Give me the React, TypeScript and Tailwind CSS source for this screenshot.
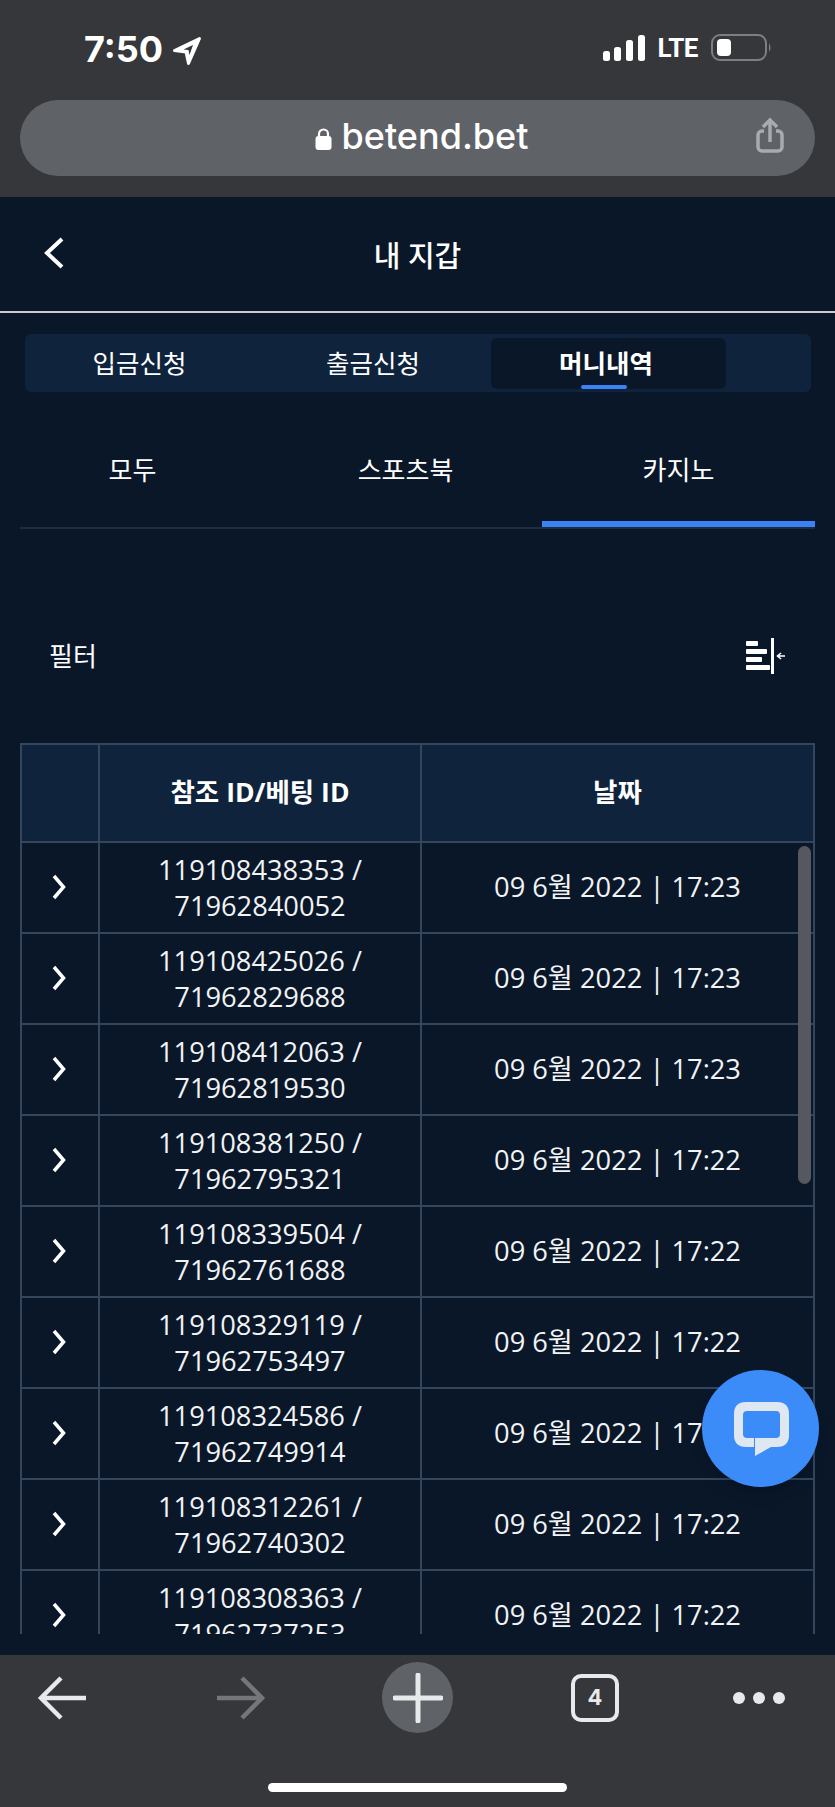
const SANS = "font-['Open_Sans','Noto_Sans_CJK_KR',sans-serif]"

const ROWS = [
  ["119108438353", "71962840052", "17:23"],
  ["119108425026", "71962829688", "17:23"],
  ["119108412063", "71962819530", "17:23"],
  ["119108381250", "71962795321", "17:22"],
  ["119108339504", "71962761688", "17:22"],
  ["119108329119", "71962753497", "17:22"],
  ["119108324586", "71962749914", "17:22"],
  ["119108312261", "71962740302", "17:22"],
  ["119108308363", "71962737253", "17:22"],
]

function StatusBar() {
  return (
    <div className="h-[100px] flex items-start justify-between pt-[30px] pl-[84px] pr-[63px]">
      <div className="flex items-center gap-[9px]">
        <span className="font-['Inter',sans-serif] font-bold text-[36px] leading-[38px] text-white">7:50</span>
        <svg width="30" height="30" viewBox="0 0 30 30" className="mt-[4px]">
          <path d="M27.500 2.500 L2.500 14.500 L14 16 L16.500 27.500 Z" fill="#fff" stroke="#fff" strokeWidth="3" strokeLinejoin="round" />
          <path d="M21 9 L11.500 13.500 L16.500 14 L17.500 19 Z" fill="#36373b" />
        </svg>
      </div>
      <div className="flex items-center pt-[4px]">
        <svg width="44" height="28" viewBox="0 0 44 28">
          <rect x="1" y="17" width="7" height="10" rx="2.500" fill="#fff" />
          <rect x="12" y="13" width="7" height="14" rx="2.500" fill="#fff" />
          <rect x="24" y="6" width="7" height="21" rx="2.500" fill="#fff" />
          <rect x="36" y="1" width="7" height="26" rx="2.500" fill="#fff" />
        </svg>
        <span className="ml-[12px] font-['Roboto',sans-serif] font-bold text-[26px] leading-[28px] text-white tracking-[-0.5px]">LTE</span>
        <svg width="62" height="28" viewBox="0 0 62 28" className="ml-[12px]">
          <rect x="2" y="1" width="54" height="25" rx="8" fill="none" stroke="#7d7e81" strokeWidth="2" />
          <rect x="7" y="5" width="14" height="17" rx="4" fill="#fff" />
          <path d="M59 9 Q62 13.500 59 18 Z" fill="#7d7e81" />
        </svg>
      </div>
    </div>
  )
}

function UrlBar() {
  return (
    <div className="relative mx-[20px] h-[76px] rounded-[38px] bg-[#5f6266] flex items-center justify-center pl-[8px]">
      <div className="flex items-center gap-[10px] -mt-[4px]">
        <svg width="17" height="24" viewBox="0 0 17 24" className="mt-[5px]">
          <path d="M4 10 V7 a4.500 4.500 0 0 1 9 0 V10" fill="none" stroke="#fff" strokeWidth="2.200" />
          <rect x="0.500" y="9" width="16" height="14" rx="3" fill="#fff" />
        </svg>
        <span className="font-['Inter',sans-serif] font-medium text-[36px] leading-[44px] text-white">betend.bet</span>
      </div>
      <svg width="30" height="36" viewBox="0 0 30 36" className="absolute right-[30px] top-[17px]">
        <path d="M9 14 H7 a4 4 0 0 0 -4 4 V30 a4 4 0 0 0 4 4 H23 a4 4 0 0 0 4 -4 V18 a4 4 0 0 0 -4 -4 H21" fill="none" stroke="#a9abae" strokeWidth="3.500" />
        <path d="M15 25 V3 M8 10 L15 3 L22 10" fill="none" stroke="#a9abae" strokeWidth="3.500" />
      </svg>
    </div>
  )
}

function MainTabs() {
  return (
    <div className="mt-[21px] ml-[25px] mr-[24px] h-[58px] rounded-[6px] bg-[#10233d] flex items-center text-[25.500px] text-white">
      <div className="w-[233px] pr-[4px] text-center">입금신청</div>
      <div className="w-[233px] pr-[3px] text-center">출금신청</div>
      <div className="relative w-[235px] h-[51px] flex items-center justify-center pr-[5px] rounded-[6px] bg-[#0a1729] font-semibold">
        머니내역
        <div className="absolute bottom-0 left-[90px] w-[46px] h-[4px] rounded-[2px] bg-[#3b82f6]" />
      </div>
    </div>
  )
}

function SubTabs() {
  return (
    <div className="mt-[21px] mx-[20px] h-[116px] grid grid-cols-[249px_273px_273px] border-b-2 border-[#1f2d40] text-[26px] text-white">
      <div className="pr-[24px] pt-[35px] text-center leading-[44px]">모두</div>
      <div className="pt-[35px] text-center leading-[44px]">스포츠북</div>
      <div className="pt-[35px] text-center leading-[44px] border-b-[6px] border-[#3b82f6]">카지노</div>
    </div>
  )
}

function FilterRow() {
  return (
    <div className="mx-[20px] mt-[93px] h-[68px] flex items-center justify-between pl-[29px] pr-[30px] text-[26px] text-white">
      <span>필터</span>
      <svg width="40" height="36" viewBox="0 0 40 36">
        <rect x="1" y="3" width="12" height="5" rx="1" fill="#fff" />
        <rect x="1" y="11" width="21" height="5" rx="1" fill="#fff" />
        <rect x="1" y="19" width="16" height="5" rx="1" fill="#fff" />
        <rect x="1" y="27" width="24" height="5" rx="1" fill="#fff" />
        <rect x="26" y="0" width="3" height="36" fill="#fff" />
        <path d="M40 18 H33 M36 15 L32.500 18 L36 21" fill="none" stroke="#fff" strokeWidth="1.600" />
      </svg>
    </div>
  )
}

function HistoryTable() {
  return (
    <div className="mt-[53px] mx-[20px] h-[891px] overflow-hidden">
      <table className="w-[795px] table-fixed border-collapse text-[27.250px] text-[#f1f3f5]">
        <thead>
          <tr className="h-[98px] bg-[#10233d] text-white text-[26.500px]">
            <th className="w-[78px] border-2 border-[#33465c]" />
            <th className="w-[322px] border-2 border-[#33465c] font-bold">참조 ID/베팅 ID</th>
            <th className="border-2 border-[#33465c] font-bold">날짜</th>
          </tr>
        </thead>
        <tbody>
          {ROWS.map((r) => (
            <tr key={r[0]} className="h-[91px]">
              <td className="border-2 border-[#33465c]">
                <svg width="16" height="30" viewBox="0 0 16 30" className="mx-auto -translate-x-[1.500px] -translate-y-[1px]">
                  <path d="M3.500 4 L13 15 L3.500 26" fill="none" stroke="#fff" strokeWidth="3.500" />
                </svg>
              </td>
              <td className="border-2 border-[#33465c] text-center leading-[36px]">
                {r[0]} /<br />
                {r[1]}
              </td>
              <td className="border-2 border-[#33465c] text-center">09 6월 2022 | {r[2]}</td>
            </tr>
          ))}
        </tbody>
      </table>
    </div>
  )
}

function BottomBar() {
  return (
    <div className="h-[152px] bg-[#36373b] flex flex-col items-center">
      <div className="w-full h-[71px] mt-[7px] flex items-center pl-[37px]">
        <svg width="50" height="44" viewBox="0 0 50 44">
          <path d="M49 22 H5 M24 2 L4 22 L24 42" fill="none" stroke="#e8e9ea" strokeWidth="4.500" />
        </svg>
        <svg width="50" height="44" viewBox="0 0 50 44" className="ml-[129px]">
          <path d="M1 22 H45 M26 2 L46 22 L26 42" fill="none" stroke="#75767a" strokeWidth="4.500" />
        </svg>
        <div className="ml-[116px] w-[71px] h-[71px] rounded-full bg-[#5f6266] flex items-center justify-center">
          <svg width="50" height="50" viewBox="0 0 50 50">
            <path d="M25 2 V48 M2 25 H48" stroke="#e8e9ea" strokeWidth="5" strokeLinecap="round" />
          </svg>
        </div>
        <div className="ml-[118px] w-[48px] h-[48px] rounded-[10px] border-[4px] border-[#e8e9ea] flex items-center justify-center font-['Inter',sans-serif] font-bold text-[22px] text-[#e8e9ea]">
          4
        </div>
        <svg width="52" height="14" viewBox="0 0 52 14" className="ml-[114px]">
          <circle cx="6" cy="7" r="6" fill="#e8e9ea" />
          <circle cx="26" cy="7" r="6" fill="#e8e9ea" />
          <circle cx="46" cy="7" r="6" fill="#e8e9ea" />
        </svg>
      </div>
      <div className="mt-[50px] w-[299px] h-[9px] rounded-full bg-white" />
    </div>
  )
}

export default function App() {
  return (
    <div className={`relative w-[835px] h-[1807px] overflow-hidden bg-[#0a1729] flex flex-col ${SANS}`}>
      <div className="h-[197px] bg-[#36373b]">
        <StatusBar />
        <UrlBar />
      </div>
      <div className="h-[116px] flex items-center justify-center relative border-b-2 border-[#c9ccd0]">
        <svg width="22" height="34" viewBox="0 0 22 34" className="absolute left-[43px] top-[39px]">
          <path d="M19 3 L4 17 L19 31" fill="none" stroke="#fff" strokeWidth="4" />
        </svg>
        <span className="text-[29px] font-medium text-white mt-[3px]">내 지갑</span>
      </div>
      <MainTabs />
      <SubTabs />
      <FilterRow />
      <HistoryTable />
      <div className="h-[21px]" />
      <BottomBar />
      {/* 스크롤바, 채팅 버튼 - 콘텐츠 위 오버레이 */}
      <div className="absolute left-[798px] top-[846px] w-[13px] h-[338px] rounded-full bg-[#55585f]" />
      <div className="absolute left-[702px] top-[1370px] w-[117px] h-[117px] rounded-full bg-[#3b8bf8] shadow-lg flex items-center justify-center">
        <svg width="60" height="60" viewBox="0 0 60 60">
          <path
            d="M24 57 V39 H45 Q49 39 49 35 V16 Q49 12 45 12 H16 Q12 12 12 16 V35 Q12 39 16 39 H23 V48 H15 Q3 48 3 36 V15 Q3 3 15 3 H46 Q58 3 58 15 V36 Q58 48 46 48 H40 Z"
            fill="#dfe8f0"
          />
        </svg>
      </div>
    </div>
  )
}
